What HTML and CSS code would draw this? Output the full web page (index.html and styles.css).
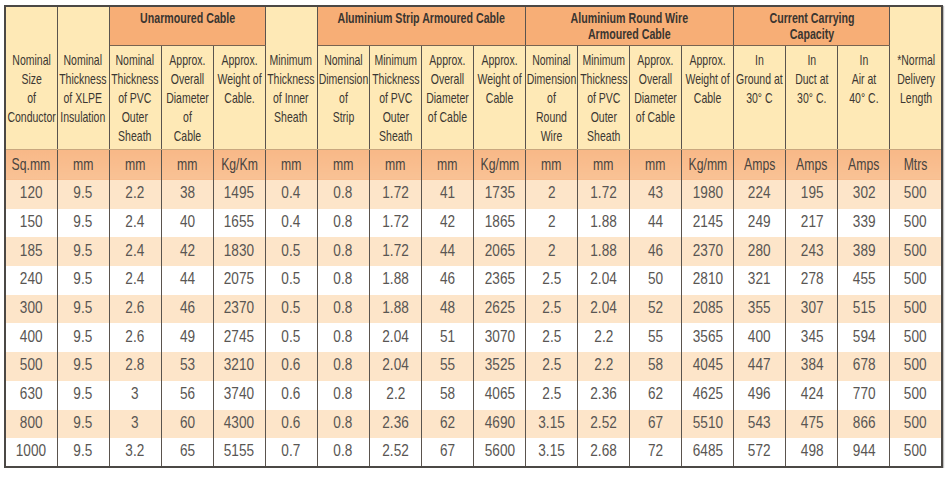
FILE: index.html
```html
<!DOCTYPE html>
<html lang="en">
<head>
<meta charset="utf-8">
<title>XLPE Cable Table</title>
<link rel="stylesheet" href="styles.css">
</head>
<body>
<div class="wrap">
<table class="cable">
  <colgroup>
    <col><col><col><col><col><col><col><col><col><col><col><col><col><col><col><col><col><col>
  </colgroup>
  <thead>
    <tr class="groups">
      <th class="sub tall" rowspan="2"><span>Nominal<br>Size<br>of<br>Conductor</span></th>
      <th class="sub tall" rowspan="2"><span>Nominal<br>Thickness<br>of XLPE<br>Insulation</span></th>
      <th class="grp" colspan="3"><span>Unarmoured Cable</span></th>
      <th class="sub tall" rowspan="2"><span>Minimum<br>Thickness<br>of Inner<br>Sheath</span></th>
      <th class="grp" colspan="4"><span>Aluminium Strip Armoured Cable</span></th>
      <th class="grp" colspan="4"><span>Aluminium Round Wire<br>Armoured Cable</span></th>
      <th class="grp" colspan="3"><span>Current Carrying<br>Capacity</span></th>
      <th class="sub tall" rowspan="2"><span>*Normal<br>Delivery<br>Length</span></th>
    </tr>
    <tr class="subs">
      <th class="sub"><span>Nominal<br>Thickness<br>of PVC<br>Outer<br>Sheath</span></th>
      <th class="sub"><span>Approx.<br>Overall<br>Diameter<br>of<br>Cable</span></th>
      <th class="sub"><span>Approx.<br>Weight of<br>Cable.</span></th>
      <th class="sub"><span>Nominal<br>Dimension<br>of<br>Strip</span></th>
      <th class="sub"><span>Minimum<br>Thickness<br>of PVC<br>Outer<br>Sheath</span></th>
      <th class="sub"><span>Approx.<br>Overall<br>Diameter<br>of Cable</span></th>
      <th class="sub"><span>Approx.<br>Weight of<br>Cable</span></th>
      <th class="sub"><span>Nominal<br>Dimension<br>of<br>Round<br>Wire</span></th>
      <th class="sub"><span>Minimum<br>Thickness<br>of PVC<br>Outer<br>Sheath</span></th>
      <th class="sub"><span>Approx.<br>Overall<br>Diameter<br>of Cable</span></th>
      <th class="sub"><span>Approx.<br>Weight of<br>Cable</span></th>
      <th class="sub"><span>In<br>Ground at<br>30° C</span></th>
      <th class="sub"><span>In<br>Duct at<br>30° C.</span></th>
      <th class="sub"><span>In<br>Air at<br>40° C.</span></th>
    </tr>
    <tr class="units">
      <th><span>Sq.mm</span></th><th><span>mm</span></th><th><span>mm</span></th><th><span>mm</span></th><th><span>Kg/Km</span></th><th><span>mm</span></th>
      <th><span>mm</span></th><th><span>mm</span></th><th><span>mm</span></th><th><span>Kg/mm</span></th>
      <th><span>mm</span></th><th><span>mm</span></th><th><span>mm</span></th><th><span>Kg/mm</span></th>
      <th><span>Amps</span></th><th><span>Amps</span></th><th><span>Amps</span></th><th><span>Mtrs</span></th>
    </tr>
  </thead>
  <tbody>
    <tr class="odd"><td><span>120</span></td><td><span>9.5</span></td><td><span>2.2</span></td><td><span>38</span></td><td><span>1495</span></td><td><span>0.4</span></td><td><span>0.8</span></td><td><span>1.72</span></td><td><span>41</span></td><td><span>1735</span></td><td><span>2</span></td><td><span>1.72</span></td><td><span>43</span></td><td><span>1980</span></td><td><span>224</span></td><td><span>195</span></td><td><span>302</span></td><td><span>500</span></td></tr>
    <tr><td><span>150</span></td><td><span>9.5</span></td><td><span>2.4</span></td><td><span>40</span></td><td><span>1655</span></td><td><span>0.4</span></td><td><span>0.8</span></td><td><span>1.72</span></td><td><span>42</span></td><td><span>1865</span></td><td><span>2</span></td><td><span>1.88</span></td><td><span>44</span></td><td><span>2145</span></td><td><span>249</span></td><td><span>217</span></td><td><span>339</span></td><td><span>500</span></td></tr>
    <tr class="odd"><td><span>185</span></td><td><span>9.5</span></td><td><span>2.4</span></td><td><span>42</span></td><td><span>1830</span></td><td><span>0.5</span></td><td><span>0.8</span></td><td><span>1.72</span></td><td><span>44</span></td><td><span>2065</span></td><td><span>2</span></td><td><span>1.88</span></td><td><span>46</span></td><td><span>2370</span></td><td><span>280</span></td><td><span>243</span></td><td><span>389</span></td><td><span>500</span></td></tr>
    <tr><td><span>240</span></td><td><span>9.5</span></td><td><span>2.4</span></td><td><span>44</span></td><td><span>2075</span></td><td><span>0.5</span></td><td><span>0.8</span></td><td><span>1.88</span></td><td><span>46</span></td><td><span>2365</span></td><td><span>2.5</span></td><td><span>2.04</span></td><td><span>50</span></td><td><span>2810</span></td><td><span>321</span></td><td><span>278</span></td><td><span>455</span></td><td><span>500</span></td></tr>
    <tr class="odd"><td><span>300</span></td><td><span>9.5</span></td><td><span>2.6</span></td><td><span>46</span></td><td><span>2370</span></td><td><span>0.5</span></td><td><span>0.8</span></td><td><span>1.88</span></td><td><span>48</span></td><td><span>2625</span></td><td><span>2.5</span></td><td><span>2.04</span></td><td><span>52</span></td><td><span>2085</span></td><td><span>355</span></td><td><span>307</span></td><td><span>515</span></td><td><span>500</span></td></tr>
    <tr><td><span>400</span></td><td><span>9.5</span></td><td><span>2.6</span></td><td><span>49</span></td><td><span>2745</span></td><td><span>0.5</span></td><td><span>0.8</span></td><td><span>2.04</span></td><td><span>51</span></td><td><span>3070</span></td><td><span>2.5</span></td><td><span>2.2</span></td><td><span>55</span></td><td><span>3565</span></td><td><span>400</span></td><td><span>345</span></td><td><span>594</span></td><td><span>500</span></td></tr>
    <tr class="odd"><td><span>500</span></td><td><span>9.5</span></td><td><span>2.8</span></td><td><span>53</span></td><td><span>3210</span></td><td><span>0.6</span></td><td><span>0.8</span></td><td><span>2.04</span></td><td><span>55</span></td><td><span>3525</span></td><td><span>2.5</span></td><td><span>2.2</span></td><td><span>58</span></td><td><span>4045</span></td><td><span>447</span></td><td><span>384</span></td><td><span>678</span></td><td><span>500</span></td></tr>
    <tr><td><span>630</span></td><td><span>9.5</span></td><td><span>3</span></td><td><span>56</span></td><td><span>3740</span></td><td><span>0.6</span></td><td><span>0.8</span></td><td><span>2.2</span></td><td><span>58</span></td><td><span>4065</span></td><td><span>2.5</span></td><td><span>2.36</span></td><td><span>62</span></td><td><span>4625</span></td><td><span>496</span></td><td><span>424</span></td><td><span>770</span></td><td><span>500</span></td></tr>
    <tr class="odd"><td><span>800</span></td><td><span>9.5</span></td><td><span>3</span></td><td><span>60</span></td><td><span>4300</span></td><td><span>0.6</span></td><td><span>0.8</span></td><td><span>2.36</span></td><td><span>62</span></td><td><span>4690</span></td><td><span>3.15</span></td><td><span>2.52</span></td><td><span>67</span></td><td><span>5510</span></td><td><span>543</span></td><td><span>475</span></td><td><span>866</span></td><td><span>500</span></td></tr>
    <tr><td><span>1000</span></td><td><span>9.5</span></td><td><span>3.2</span></td><td><span>65</span></td><td><span>5155</span></td><td><span>0.7</span></td><td><span>0.8</span></td><td><span>2.52</span></td><td><span>67</span></td><td><span>5600</span></td><td><span>3.15</span></td><td><span>2.68</span></td><td><span>72</span></td><td><span>6485</span></td><td><span>572</span></td><td><span>498</span></td><td><span>944</span></td><td><span>500</span></td></tr>
  </tbody>
</table>
</div>
</body>
</html>
```

FILE: styles.css
```css
html, body {
  margin: 0;
  padding: 0;
  background: #ffffff;
}

.wrap {
  padding: 5px 0 0 4px;
}

.cable {
  width: 939px;
  table-layout: fixed;
  border-collapse: collapse;
  font-family: "Liberation Sans", Arial, sans-serif;
  border: 2px solid #4b4845;
  box-shadow: 1px 1px 1px rgba(0, 0, 0, 0.25);
}

.cable th,
.cable td {
  padding: 0;
  text-align: center;
  border-left: 1px solid #5a544e;
  border-right: 1px solid #5a544e;
  white-space: nowrap;
}

/* condensed lettering: the text block is narrowed around its centre */
.cable th > span,
.cable td > span {
  display: inline-block;
  margin: 0 -40px;
  transform-origin: 50% 50%;
}

.groups {
  height: 39px;
}

.grp {
  background: #f7ae76;
  color: #3a3530;
  font-weight: bold;
  font-size: 14px;
  line-height: 16px;
  vertical-align: top;
  padding-top: 3px !important;
  border-bottom: 1px solid #7a6450;
}

.grp > span {
  transform: scaleX(0.76);
}

.subs {
  height: 104px;
}

.sub {
  background: #fee9b6;
  color: #3b3732;
  font-weight: normal;
  font-size: 15px;
  line-height: 19px;
  vertical-align: top;
  padding-top: 4px !important;
  border-bottom: 1px solid #c9a77e;
}

.sub > span {
  transform: scaleX(0.7);
}

.tall {
  padding-top: 43px !important;
}

.units {
  height: 31px;
}

.units th {
  background: linear-gradient(#f8b887, #f9c295);
  color: #4a4540;
  font-weight: normal;
  font-size: 17px;
  vertical-align: middle;
}

.units th > span {
  transform: scaleX(0.72);
}

.cable tbody tr {
  height: 28.7px;
  background: #ffffff;
}

.cable tbody tr.odd {
  background: #fde5c9;
}

.cable td {
  color: #595653;
  font-size: 17px;
  vertical-align: middle;
  padding-bottom: 2px;
}

.cable td > span {
  transform: scaleX(0.8);
}
```
